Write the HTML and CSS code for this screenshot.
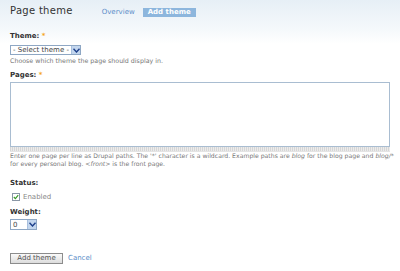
FILE: index.html
```html
<!DOCTYPE html>
<html>
<head>
  <meta charset="UTF-8" />
  <title>Page theme</title>
  <link rel="stylesheet" href="styles.css">
</head>
<body>

  <div class="header">
    <h1>Page theme</h1>
    <ul class="tabs">
      <li><a href="#">Overview</a></li>
      <li class="active"><a href="#">Add theme</a></li>
    </ul>
  </div>

  <form class="theme-form">
    <div class="form-item">
      <label>Theme: <span class="req">*</span></label>
      <span class="select-box wide">
        <select class="select">
          <option>- Select theme -</option>
        </select>
        <span class="arrow"><svg width="7" height="5" viewBox="0 0 7 5"><path d="M0.5 0.8 L3.5 4 L6.5 0.8" fill="none" stroke="#1d3f8a" stroke-width="1.4"/></svg></span>
      </span>
      <div class="description">Choose which theme the page should display in.</div>
    </div>

    <div class="form-item">
      <label>Pages: <span class="req">*</span></label>
      <textarea class="pages" rows="6"></textarea>
      <div class="grip"></div>
      <div class="description long">Enter one page per line as Drupal paths. The '*' character is a wildcard. Example paths are <em>blog</em> for the blog page and <em>blog/*</em> for every personal blog. <em>&lt;front&gt;</em> is the front page.</div>
    </div>

    <div class="form-item">
      <label>Status:</label>
      <div class="checkbox">
        <span class="box"><svg width="6" height="6" viewBox="0 0 6 6"><path d="M0.8 3 L2.4 4.6 L5.2 1.2" fill="none" stroke="#3a9a2a" stroke-width="1.2"/></svg></span>
        <span>Enabled</span>
      </div>
    </div>

    <div class="form-item">
      <label>Weight:</label>
      <span class="select-box narrow">
        <select class="select">
          <option>0</option>
        </select>
        <span class="arrow"><svg width="7" height="5" viewBox="0 0 7 5"><path d="M0.5 0.8 L3.5 4 L6.5 0.8" fill="none" stroke="#1d3f8a" stroke-width="1.4"/></svg></span>
      </span>
    </div>

    <div class="actions">
      <button type="button" class="submit">Add theme</button>
      <a href="#" class="cancel">Cancel</a>
    </div>
  </form>

</body>
</html>
```

FILE: styles.css
```css
html, body {
  overflow: hidden;
}
body {
  margin: 0;
  padding: 4px 10px 0;
  font-family: "DejaVu Sans", Verdana, sans-serif;
  line-height: 9px;
  color: #333;
  background: linear-gradient(#e6eff6, #f4f8fb 28px, #fff 44px) no-repeat;
  background-size: 100% 50px;
  background-color: #fff;
}
.header {
  display: flex;
  align-items: center;
  height: 14px;
}
h1 {
  margin: 0;
  font-size: 10px;
  line-height: 14px;
  font-weight: normal;
  color: #333;
  letter-spacing: 0.3px;
}
.tabs {
  display: flex;
  align-items: center;
  list-style: none;
  margin: 2px 0 0 29px;
  padding: 0;
}
.tabs li {
  margin-right: 8px;
}
.tabs a {
  display: block;
  font-size: 7px;
  line-height: 9px;
  color: #5b8dc8;
  text-decoration: none;
}
.tabs .active a {
  background-color: #8db6dd;
  color: #fff;
  font-weight: bold;
  padding: 0 5px;
}
.theme-form {
  margin-top: 14px;
}
.form-item {
  margin-bottom: 6px;
}
.form-item label {
  display: block;
  font-size: 7px;
  line-height: 9px;
  font-weight: bold;
  color: #333;
}
.req {
  color: #f5a623;
}
.select-box {
  display: flex;
  margin-top: 4px;
  border: 1px solid #8ea7c4;
  background: #fff;
  height: 8px;
}
.select-box.wide {
  width: 69px;
}
.select-box.narrow {
  width: 25px;
  margin-top: 2px;
  height: 9px;
}
.select {
  appearance: none;
  -webkit-appearance: none;
  border: none;
  background: transparent;
  flex: 1;
  min-width: 0;
  font-family: inherit;
  font-size: 7px;
  color: #444;
  padding: 0 2px;
  margin: 0;
  height: 100%;
  line-height: 8px;
  outline: none;
}
.arrow {
  display: flex;
  align-items: center;
  justify-content: center;
  width: 8px;
  background: #c3d6ee;
  border-left: 1px solid #a9c0de;
}
.description {
  font-size: 6.3px;
  color: #777;
  margin-top: 2px;
  line-height: 8px;
}
.description.long {
  width: 388px;
  font-size: 6.15px;
  margin-top: 0;
  line-height: 7.5px;
  margin-bottom: 12px;
}
.pages {
  display: block;
  box-sizing: border-box;
  width: 380px;
  height: 65px;
  border: 1px solid #a9bdd1;
  margin: 2px 0 0;
  resize: none;
  background: #fff;
}
.grip {
  width: 380px;
  height: 4px;
  background: repeating-linear-gradient(90deg, #d6d6d6 0 1px, #ebebeb 1px 2px);
  border-bottom: 1px solid #e4e4e4;
}
.checkbox {
  display: flex;
  align-items: center;
  font-size: 7px;
  line-height: 8px;
  color: #888;
  margin: 5px 0 7px 2px;
}
.box {
  display: flex;
  align-items: center;
  justify-content: center;
  box-sizing: border-box;
  width: 8px;
  height: 8px;
  border: 1px solid #8a97a6;
  background: #fff;
  margin-right: 3px;
}
.actions {
  margin-top: 23px;
  display: flex;
  align-items: center;
}
.submit {
  font-family: inherit;
  font-size: 7px;
  line-height: 9px;
  color: #555;
  width: 53px;
  height: 11px;
  padding: 0;
  border: 1px solid #8c8c8c;
  background: linear-gradient(#fafafa, #dcdcdc);
  margin: 0 5px 0 0;
}
.cancel {
  font-size: 7px;
  color: #5b8dc8;
  text-decoration: none;
}
```
